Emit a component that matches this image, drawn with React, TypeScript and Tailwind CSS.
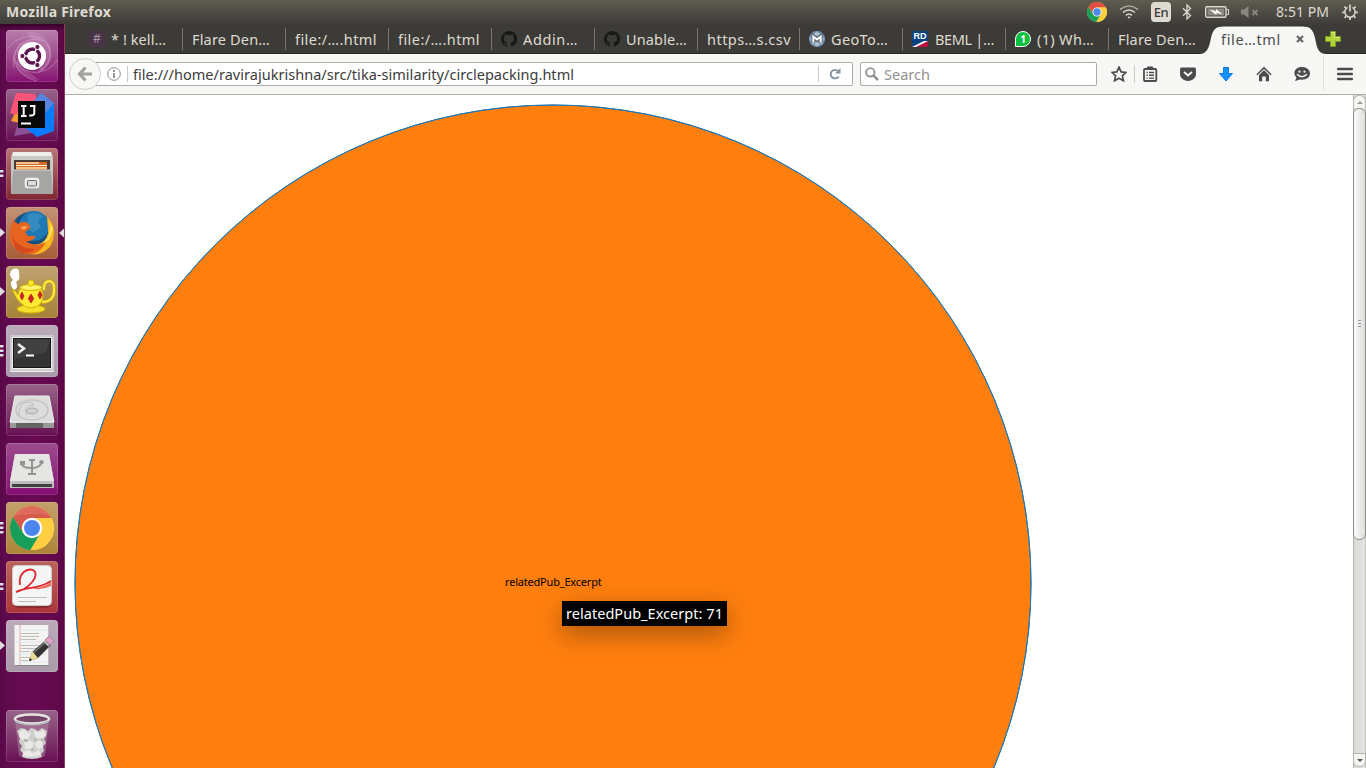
import { useLayoutEffect, useRef, useState, type ReactNode } from "react";

/** Single line of text whose tracking is adjusted so that it spans `w` pixels. */
function Fit({ w, className = "", children }: { w: number; className?: string; children: string }) {
  const ref = useRef<HTMLSpanElement>(null);
  const [tracking, setTracking] = useState(0);
  useLayoutEffect(() => {
    const el = ref.current;
    if (!el) return;
    el.style.letterSpacing = "0px";
    const next = (w - el.getBoundingClientRect().width) / children.length;
    el.style.letterSpacing = `${next}px`;
    setTracking(next);
  }, [w, children]);
  return (
    <span ref={ref} className={`inline-block shrink-0 whitespace-nowrap ${className}`} style={{ letterSpacing: tracking }}>
      {children}
    </span>
  );
}

function ChromeLogo({ className }: { className: string }) {
  return (
    <svg viewBox="0 0 44 44" className={className}>
      <circle cx="22" cy="22" r="22" fill="#ffcf40" />
      <path d="M22 12 H41.6 A22 22 0 0 0 3 11 L13.3 27 Z" fill="#dd5144" />
      <path d="M3 11 A22 22 0 0 0 20.5 44 L30.7 27 L22 32 L13.3 27 Z" fill="#1a9f5c" />
      <path d="M22 12 H41.6 A22 22 0 0 1 20.5 44 L30.7 27 Z" fill="#ffcf40" />
      <circle cx="22" cy="22" r="10" fill="#f4f4f4" />
      <circle cx="22" cy="22" r="8" fill="#4a8af4" />
    </svg>
  );
}

function TopPanel() {
  return (
    <header className="flex h-6 shrink-0 items-center bg-linear-to-b from-[#5f5c50] to-[#3e3d39] text-[14px] leading-6 text-[#dfdbd2]">
      <Fit w={105} className="ml-1.5 font-bold">Mozilla Firefox</Fit>
      <div className="ml-auto flex items-center pr-2">
        <ChromeLogo className="mr-3 size-5" />
        <svg viewBox="0 0 20 16" className="mr-3 h-4 w-5" fill="none" stroke="#dfdbd2" strokeWidth="1.6">
          <path d="M1 5.5 Q10 -1.5 19 5.5" stroke="#aaa79f" />
          <path d="M4 8.5 Q10 3.5 16 8.5" />
          <path d="M7 11.3 Q10 8.7 13 11.3" />
          <path d="M8.5 13 L10 14.8 L11.5 13 Q10 12 8.5 13Z" fill="#dfdbd2" stroke="none" />
        </svg>
        <span className="mr-[11px] flex size-5 items-center justify-center rounded-sm bg-[#dfdbd2] text-[13px] font-medium tracking-[-0.5px] text-[#3c3b37]">En</span>
        <svg viewBox="0 0 10 16" className="mr-[13px] h-4 w-[10px]" fill="none" stroke="#dfdbd2" strokeWidth="1.3">
          <path d="M1 4.3 L8.5 11.5 L5 15 V1 L8.5 4.5 L1 11.7" />
        </svg>
        <svg viewBox="0 0 24 14" className="mr-3 h-3.5 w-6">
          <rect x="0.7" y="1.7" width="20.3" height="10.6" rx="1.5" fill="none" stroke="#dfdbd2" strokeWidth="1.4" />
          <rect x="2.5" y="3.5" width="16.7" height="7" fill="#8b8982" />
          <path d="M21.5 4.5 h2 v5 h-2" fill="none" stroke="#dfdbd2" />
          <path d="M4.5 4.5 L11 6.2 L11.2 4 L17.8 9.8 L11.7 7.8 L11.3 10Z" fill="#fff" />
        </svg>
        <svg viewBox="0 0 18 14" className="mr-[17px] h-3.5 w-[18px]">
          <path d="M0 4.5 h3 L7.5 1 v12 L3 9.5 H0Z" fill="#8a8881" />
          <path d="M11.5 5 l5 5 m0 -5 l-5 5" stroke="#8a8881" strokeWidth="1.8" />
        </svg>
        <Fit w={53} className="mr-[13px]">8:51 PM</Fit>
        <svg viewBox="0 0 16 16" className="size-4" fill="none" stroke="#dfdbd2">
          <path d="M5.6 3.4 A5.2 5.2 0 1 0 10.4 3.4" strokeWidth="1.5" />
          <path d="M8 0.5 V7.5" strokeWidth="1.6" />
          <path d="M3.7 3.9 L2.3 2.5 M12.3 3.9 L13.7 2.5 M2.6 8.3 H0.2 M13.4 8.3 H15.8 M4 12.4 L2.6 13.8 M12 12.4 L13.4 13.8 M8 13.6 V16" strokeWidth="1.7" />
        </svg>
      </div>
    </header>
  );
}

const tileColors = {
  dash: "from-[#b77dac] to-[#860f72]",
  plum: "from-[#97638a] to-[#680b53]",
  files: "from-[#b77676] to-[#812534]",
  fox: "from-[#c49276] to-[#a75c38]",
  gold: "from-[#bfa370] to-[#a58136]",
  grey: "from-[#bcaabb] to-[#a99aaa]",
  violet: "from-[#9c4b90] to-[#850873]",
  chrome: "from-[#c3a06b] to-[#ad8537]",
  red: "from-[#b9655c] to-[#ac3438]",
};

function Tile({ tone, marks = "", children }: { tone: keyof typeof tileColors; marks?: string; children: ReactNode }) {
  return (
    <div className="flex h-[52px] w-16 shrink-0 items-center">
      <svg viewBox="0 0 6 52" className="h-[52px] w-1.5 shrink-0" fill="#dfdce0">
        {marks === "one" && <path d="M0 21 L5 25.5 L0 30Z" />}
        {marks === "two" && <path d="M0 22 h3.2 q1 1 0 2.4 H0Z M0 26.5 h3.2 q1 1 0 2.4 H0Z" />}
        {marks === "three" && <path d="M0 20 h3.2 q1 1 0 2.4 H0Z M0 24.5 h3.2 q1 1 0 2.4 H0Z M0 29 h3.2 q1 1 0 2.4 H0Z" />}
      </svg>
      <div className={`size-[52px] shrink-0 overflow-hidden rounded-[4px] bg-linear-to-b shadow-[inset_0_0_0_1px_rgba(255,255,255,0.15)] ${tileColors[tone]}`}>
        <svg viewBox="0 0 52 52" className="size-[52px]">{children}</svg>
      </div>
      {tone === "fox" && (
        <svg viewBox="0 0 6 12" className="h-3 w-1.5" fill="#dfdce0"><path d="M1 6 L6 1.5 V10.5Z" /></svg>
      )}
    </div>
  );
}

function Launcher() {
  return (
    <aside className="flex w-[65px] shrink-0 flex-col gap-[7px] border-r border-[#8c3a5e] bg-linear-to-r from-[#5d0a4b] via-[#680a53] to-[#600849] pt-1.5 shadow-[inset_0_6px_6px_-4px_rgba(20,0,15,0.8)]">
      <Tile tone="dash">
        <path d="M20 2 C42 0 49 18 43 32 Q39 40 32 42 L38 26 Z M8 34 C5 16 22 5 40 10 L26 14 Z M10 22 C4 36 16 50 34 50 L16 38Z" fill="#e6bddd" opacity=".2" />
        <g fill="none" stroke="#e6bddd" opacity=".4">
          <path d="M1 19 C12 3 39 1 44 21 C46 31 40 39 32 43" />
          <path d="M8 38 C4 18 20 4 38 11 C48 18 45 35 34 40" />
          <path d="M15 13 C2 27 10 46 31 51" />
          <path d="M51 30 C42 46 15 48 8 27" />
        </g>
        <circle cx="26" cy="27" r="14" fill="#5c1250" opacity=".4" />
        <circle cx="26" cy="26" r="14" fill="#fff" />
        <circle cx="26.5" cy="26" r="7" fill="none" stroke="#5e164d" strokeWidth="3.5" />
        <path d="M26.5 26 L15 26 M26.5 26 L32.5 15.5 M26.5 26 L32.5 36.5" stroke="#fff" strokeWidth="1.4" />
        <circle cx="26.5" cy="26" r="5" fill="#fff" />
        <g fill="#5e164d" stroke="#fff"><circle cx="16.4" cy="26" r="2.6" /><circle cx="31.4" cy="17" r="2.6" /><circle cx="31.4" cy="35" r="2.6" /></g>
      </Tile>
      <Tile tone="plum">
        <path d="M10 4 L29 5 L33 16 L18 30 L4 24Z" fill="#fc5378" />
        <path d="M8 26 L17 22 L18 35 L5 32Z" fill="#f69b2f" />
        <path d="M8 47 L14 28 L28 37 L30 43Z" fill="#8c5396" />
        <path d="M25 15 L35 4 L48 14 V42 L31 48 L20 39Z" fill="#087cfa" />
        <path d="M35 4 L48 14 L37 27 L25 15Z" fill="#5a83dd" />
        <rect x="12" y="12" width="27" height="27" fill="#080808" />
        <path d="M15 17 h5.5 M17.7 17 v10 M15 27 h5.5 M24 17 h5.5 M28.3 16 v8 q0 3.2 -5 2.4" fill="none" stroke="#fff" strokeWidth="2" />
        <path d="M15 34.5 h10" stroke="#fff" strokeWidth="2" />
      </Tile>
      <Tile tone="files" marks="two">
        <path d="M7 4 H45 L47 9 V46 H5 V9Z" fill="#c9c9c7" />
        <path d="M7 4 H45 L46 8 H6Z" fill="#ededec" />
        <path d="M8 12 H44 V25 H8Z" fill="#4b3934" />
        <path d="M10 14 h31 v9 h-31z" fill="#cf6c29" />
        <path d="M10 15 h23 M10 20 h31" stroke="#f5c28a" strokeWidth="2" />
        <path d="M10 17.5 h31" stroke="#fff2e1" />
        <path d="M7 22 H45 L47 46 H5Z" fill="#a5a5a3" />
        <path d="M7 22 H45" stroke="#d7d7d5" />
        <rect x="20" y="31" width="12" height="8" rx="1.5" fill="none" stroke="#eee" strokeWidth="2.5" />
        <rect x="21.5" y="32.5" width="9" height="5.5" rx="1" fill="#ddd" stroke="#666" />
      </Tile>
      <Tile tone="fox" marks="one">
        <circle cx="26" cy="26" r="21.5" fill="#15507f" />
        <circle cx="28" cy="19" r="15" fill="#1d78b4" />
        <path d="M22 7 Q31 4 37 9 L32 14 L35 20 L27 26 L21 20Z" fill="#66b8df" opacity=".3" />
        <path d="M41 10 C49 16 50 29 45 38 C38 49 25 49 16 45 L24 37 C35 40 43 32 42 22 Z" fill="#f9b51f" />
        <path d="M41 10 C47 20 44 33 33 39 Q45 35 47 22Z" fill="#ffe25a" />
        <path d="M7 13 L12 17 Q16 14 20 15 L24 18 L24 22 L19 25 L22 29 L30 29 Q27 35 20 34 Q29 41 40 35 C33 49 19 51 9 41 C1 33 4 22 7 13Z" fill="#e86421" />
        <path d="M5 27 Q12 42 29 42 Q18 51 9 41Z" fill="#d64b1d" />
        <path d="M14 20 L22 19 L18 23Z" fill="#f9ab60" />
      </Tile>
      <Tile tone="gold" marks="one">
        <path d="M8 24 Q2 17 7 14 Q1 7 7 3 Q14 1 13 8 Q15 13 10 16 Q13 21 8 24Z" fill="#fff" />
        <g stroke="#d3b400" strokeWidth="1">
          <path d="M38 24 C37 13 47 13 48 20 C49 30 46 36 36 36" fill="none" strokeWidth="3.6" />
          <path d="M38 24 C37 13 47 13 48 20 C49 30 46 36 36 36" fill="none" stroke="#ffed57" strokeWidth="1.8" />
          <ellipse cx="25" cy="43" rx="14" ry="4" fill="#f6df2d" />
          <path d="M6 23 Q10 25 12 29 Q12 20 25 19 Q37 20 37 29 Q37 41 25 42 Q13 41 6 23Z" fill="#ffe932" />
          <ellipse cx="25" cy="21.5" rx="11" ry="3" fill="#fff36c" />
          <circle cx="25" cy="17" r="3" fill="#ffe932" />
        </g>
        <g fill="#d71d26" stroke="#911" strokeWidth=".6"><path d="M16 26 l2 4 l-2 4 l-2 -4Z" /><path d="M25 28 l2.7 4.5 l-2.7 4.5 l-2.7 -4.5Z" /><path d="M34 25 l2 4 l-2 4 l-2 -4Z" /></g>
      </Tile>
      <Tile tone="grey" marks="three">
        <rect x="4" y="10" width="44" height="37" rx="1" fill="#eee" />
        <rect x="5" y="11" width="42" height="34" fill="none" stroke="#aaa" />
        <rect x="7.5" y="13.5" width="37" height="29" fill="#343434" stroke="#161616" />
        <path d="M8 14 H44 L40 27 L8 34Z" fill="#5c5c5b" opacity=".35" />
        <path d="M12 19 L18 23.5 L12 28" fill="none" stroke="#eee" strokeWidth="2.5" />
        <path d="M20 30.5 h8" stroke="#fff" strokeWidth="2" />
      </Tile>
      <Tile tone="plum">
        <path d="M9 12 H43 L48 38 V44 H4 V38Z" fill="#c9c9c7" />
        <path d="M9 12 H43 L48 38 H4Z" fill="#dcdcda" stroke="#ededed" />
        <path d="M4 39 H48 V44 H4Z" fill="#999" /><path d="M10 39 h27 v5 h-27z" fill="#646464" />
        <ellipse cx="26" cy="26" rx="16" ry="10" fill="none" stroke="#bebebe" strokeWidth="1.2" />
        <ellipse cx="26" cy="27" rx="5.5" ry="3" fill="#d0d0ce" stroke="#aaa" />
        <path d="M13 31 Q12 17 25 18 L28 21 Q16 22 21 31" fill="none" stroke="#bfbfbf" />
      </Tile>
      <Tile tone="violet">
        <path d="M9 11 H43 L48 39 V45 H4 V39Z" fill="#cfcfcd" />
        <path d="M9 11 H43 L48 38 H4Z" fill="#e5e5e3" />
        <path d="M4 38 H48 V45 H4Z" fill="#bebebc" /><path d="M6 41 h40 v3 h-40z" fill="#404040" />
        <g fill="none" stroke="#929291" strokeWidth="2"><path d="M26 30 V17 M16 21 Q16 25 26 25 Q34 25 36 19 M23 17 h6 M22 31 h8" /></g>
        <path d="M14 18 h5 v4 h-5z M34 17 l4 1 l-1 3 l-4 -1z" fill="#929291" />
      </Tile>
      <Tile tone="chrome" marks="three">
        <g transform="translate(4 4)">
          <circle cx="22" cy="22" r="22" fill="#ffce43" />
          <path d="M22 12 H41.6 A22 22 0 0 0 3 11 L13.3 27Z" fill="#d85a4b" />
          <path d="M3 11 A22 22 0 0 0 20.5 44 L30.7 27 L22 32 L13.3 27Z" fill="#179e5a" />
          <path d="M22 12 H41.6 A22 22 0 0 1 20.5 44 L30.7 27Z" fill="#ffce43" />
          <path d="M4 9.5 A22 22 0 0 1 40 9.5 Q22 7 4 9.5Z" fill="#eb8b80" opacity=".35" />
          <circle cx="22" cy="22" r="10.2" fill="#fff" /><circle cx="22" cy="22" r="8" fill="#4a86ee" />
        </g>
      </Tile>
      <Tile tone="red" marks="two">
        <rect x="7" y="6" width="39" height="41" rx="5" fill="#6b1b1b" opacity=".5" />
        <rect x="6.5" y="4.5" width="39" height="40" rx="4" fill="#f5f5f5" stroke="#ccc" />
        <path d="M14 24 C12 12 21 7 27 9 C35 14 23 28 10 31 C22 25 32 29 45 20" fill="none" stroke="#df282d" strokeWidth="1.8" />
        <path d="M24 27 Q36 28 45 21 V25 Q35 30 24 27Z" fill="#ee6a64" />
        <path d="M12 36.5 h29 M12 40.5 h18" stroke="#bcbcbc" />
      </Tile>
      <Tile tone="grey" marks="one">
        <rect x="9" y="6" width="34" height="40" fill="#8d858c" /><rect x="8.5" y="5" width="34" height="40" fill="#f4f4f2" />
        <path d="M14 5 V45" stroke="#e8a7a7" /><path d="M10 10 h31 M10 22 h31 M10 34 h31 M10 42 h31" stroke="#dce8f2" />
        <path d="M15 13.5 h18 M15 16.5 h18 M15 19.5 h15 M15 25.5 h18 M15 28.5 h17 M15 31.5 h9 M15 37.5 h9 M15 40.5 h7" stroke="#bcbcba" />
        <path d="M23 41 L26 32 L40 20 L45 25 L32 38Z" fill="#333" /><path d="M27 33 L41 21" stroke="#777" strokeWidth="1.5" />
        <path d="M23 41 L26 31 L32 38Z" fill="#eddb94" /><path d="M23 41 l1 -3 l2 2Z" fill="#111" />
        <path d="M39 20 L43 16 L48 21 L44 25Z" fill="#dfa1c7" stroke="#aa829c" /><path d="M38 21 l5 5" stroke="#bbb" strokeWidth="2" />
      </Tile>
      <div className="mt-[31px]">
        <Tile tone="plum">
          <path d="M9 10 H43 L39 46 Q26 51 13 46Z" fill="#d5bfd1" opacity=".3" />
          <path d="M11 21 l4 -3 l4 1 l3 2 l3 -3 l4 1 l3 2 l4 -3 l5 3 l-1 5 l-2 3 l2 4 l-3 3 l1 5 l-3 3 l1 3 q-10 4 -20 0 l1 -4 l-3 -3 l2 -4 l-3 -4 l1 -4Z" fill="#cfcfcd" />
          <g fill="#e9e9e7">
            <path d="M13 22 l5 -3 l4 4 l3 -1 l-2 6 l-6 2 l-4 -3Z" />
            <path d="M28 21 l5 1 l5 -2 l2 5 l-5 4 l-6 -2Z" />
            <path d="M18 33 l6 -3 l4 4 l-3 5 l-6 0Z" />
            <path d="M30 31 l6 0 l1 6 l-5 2 l-3 -4Z" />
            <path d="M17 42 l5 -2 l5 3 l6 -3 l2 5 q-9 3 -18 1Z" />
          </g>
          <path d="M18 30 l4 1 M28 29 l3 2 M25 39 l3 1 M35 29 l2 2" stroke="#a4a4a2" strokeWidth="1.3" />
          <ellipse cx="26" cy="9" rx="17" ry="4.5" fill="#764369" stroke="#e4e4e2" strokeWidth="2.5" />
          <path d="M9 10 Q26 18 43 10 v2 Q26 19 9 12Z" fill="#bbb" />
        </Tile>
      </div>
    </aside>
  );
}

type TabInfo = { title: string; w: number; icon?: string };
const tabs: TabInfo[] = [
  { title: "* ! kell…", w: 55, icon: "hash" },
  { title: "Flare Den…", w: 78 },
  { title: "file:/….html", w: 82 },
  { title: "file:/….html", w: 82 },
  { title: "Addin…", w: 55, icon: "github" },
  { title: "Unable…", w: 61, icon: "github" },
  { title: "https…s.csv", w: 84 },
  { title: "GeoTo…", w: 57, icon: "globe" },
  { title: "BEML |…", w: 59, icon: "rd" },
  { title: "(1) Wh…", w: 57, icon: "whatsapp" },
  { title: "Flare Den…", w: 78 },
];

function Favicon({ kind }: { kind: string }) {
  if (kind === "hash")
    return <span className="mr-1.5 flex size-4 shrink-0 items-center justify-center bg-[#493347] text-[12px] leading-4 text-[#a993a7]">#</span>;
  if (kind === "rd")
    return (
      <span className="mr-[7px] flex size-4 shrink-0 flex-col bg-[#b9113d]">
        <span className="h-[10px] bg-[#07437e] text-center font-['Liberation_Sans',sans-serif] text-[9px] leading-[10px] font-bold text-white">RD</span>
        <svg viewBox="0 0 16 6" className="h-[6px] w-4"><path d="M0 0 H13 L0 6Z" fill="#07437e" /><path d="M12 0 h4 L4 6 H0Z" fill="#fff" /></svg>
      </span>
    );
  if (kind === "whatsapp")
    return (
      <span className="mr-1.5 flex size-4 shrink-0 items-center justify-center rounded-full rounded-bl-none border border-white bg-[#0fc143] text-[10px] font-bold text-white">1</span>
    );
  if (kind === "globe")
    return (
      <svg viewBox="0 0 16 16" className="mr-1.5 size-4 shrink-0">
        <circle cx="8" cy="8" r="7.3" fill="#b9c6d1" stroke="#779fcb" strokeWidth="1.4" />
        <path d="M1 5 h14 M1 11 h14 M5 1 v14 M11 1 v14" stroke="#6b7a89" />
        <path d="M4.3 11.5 V5.5 L8 8.5 L11.7 5.5 V11.5" fill="none" stroke="#526070" strokeWidth="4" /><path d="M4.3 11.5 V5.5 L8 8.5 L11.7 5.5 V11.5" fill="none" stroke="#fff" strokeWidth="2" />
      </svg>
    );
  return (
    <svg viewBox="0 0 16 16" className="mr-1.5 size-4 shrink-0" fill="#191818">
      <path d="M8 0a8 8 0 0 0-2.53 15.59c.4.07.55-.17.55-.38v-1.49C3.8 14.2 3.33 12.8 3.33 12.8c-.36-.92-.89-1.17-.89-1.17-.73-.5.05-.49.05-.49.8.06 1.23.83 1.23.83.71 1.23 1.87.87 2.33.66.07-.52.28-.87.5-1.07-1.77-.2-3.64-.89-3.64-3.95 0-.87.31-1.59.82-2.15-.08-.2-.35-1.01.08-2.11 0 0 .67-.22 2.2.82a7.7 7.7 0 0 1 4 0c1.53-1.04 2.2-.82 2.2-.82.43 1.1.16 1.91.08 2.11.51.56.82 1.28.82 2.15 0 3.07-1.87 3.75-3.65 3.95.29.25.54.73.54 1.48v2.2c0 .21.15.46.55.38A8 8 0 0 0 8 0Z" />
    </svg>
  );
}

function TabBar() {
  return (
    <div className="flex h-[30px] shrink-0 items-center border-b border-[#282724] bg-[#3c3b37] pt-px pl-3.5 text-[14.5px] leading-6 text-[#dfdbd2]">
      {tabs.map((tab, i) => (
        <div
          key={i}
          className={`flex h-[22px] shrink-0 items-center ${i === 0 ? "w-[104px] pl-[10px]" : i === 6 ? "w-[102px] pl-[9px]" : i === 10 ? "w-[94px] pl-[9px]" : "w-[103px] pl-[9px]"} ${i < 10 ? "border-r border-[#777570]" : ""}`}
        >
          {tab.icon && <Favicon kind={tab.icon} />}
          <Fit w={tab.w}>{tab.title}</Fit>
        </div>
      ))}
      <div className="relative -ml-1 flex h-[29px] w-[130px] shrink-0 items-center text-[#4c4c4c]">
        <svg viewBox="0 0 130 29" className="absolute inset-0 h-[29px] w-[130px]">
          <path d="M0 29 C8 29 10 23 12 13 C14 4 17 1.5 24 1.5 H103 C111 1.5 114 4 116 13 C118 23 119 29 128 29Z" fill="#f7f7f5" />
        </svg>
        <Fit w={60} className="relative ml-[22px]">file…tml</Fit>
        <svg viewBox="0 0 8 8" className="relative ml-[15px] size-2"><path d="M1 1 L7 7 M7 1 L1 7" stroke="#666" strokeWidth="2.2" /></svg>
      </div>
      <svg viewBox="0 0 16 16" className="-ml-[4px] size-4 shrink-0"><path d="M5.5 .5 h5 v5 h5 v5 h-5 v5 h-5 v-5 h-5 v-5 h5Z" fill="#b5d33b" stroke="#759c27" /><path d="M6.5 1.5 h3 v5 h5" fill="none" stroke="#d8eb79" /></svg>
    </div>
  );
}

function Toolbar() {
  return (
    <div className="flex h-[41px] shrink-0 items-center border-b border-[#adada7] bg-[#f7f7f5] text-[14.5px] text-[#3c3c3c]">
      <div className="z-10 ml-1 flex size-8 shrink-0 items-center justify-center rounded-full border border-[#cfcfcb] bg-[#f7f7f5]">
        <svg viewBox="0 0 16 16" className="size-4" fill="none" stroke="#a2a2a0" strokeWidth="3.2"><path d="M8.5 1.5 L2.5 8 L8.5 14.5 M3 8 H15" /></svg>
      </div>
      <div className="-ml-[9px] flex h-6 w-[761px] shrink-0 items-center rounded-r-[2px] border border-l-0 border-[#adada7] bg-white pl-[15px]">
        <svg viewBox="0 0 14 14" className="size-3.5 shrink-0"><circle cx="7" cy="7" r="6.3" fill="none" stroke="#8a8a8a" /><path d="M7 3 V5 M7 6 V11" stroke="#8a8a8a" strokeWidth="1.8" /></svg>
        <span className="ml-1.5 h-4 w-px bg-[#ccc]" />
        <Fit w={441} className="ml-[5px] leading-5">file:///home/ravirajukrishna/src/tika-similarity/circlepacking.html</Fit>
        <span className="ml-auto h-4 w-px bg-[#ccc]" />
        <svg viewBox="0 0 12 12" className="mr-[11px] ml-[10px] size-3 shrink-0"><path d="M9.2 3.2 A4.3 4.3 0 1 0 9.6 8.6" fill="none" stroke="#8393a2" strokeWidth="1.9" /><path d="M11.5 0 V5.5 H6Z" fill="#8393a2" /></svg>
      </div>
      <div className="ml-[7px] flex h-6 w-[237px] shrink-0 items-center rounded-[2px] border border-[#adada7] bg-white pl-1 text-[#929292]">
        <svg viewBox="0 0 14 14" className="mr-[5px] size-3.5" fill="none" stroke="#929292"><circle cx="5.3" cy="5.3" r="4.2" strokeWidth="1.9" /><path d="M8.3 8.3 L13 13" strokeWidth="2.5" /></svg>
        <Fit w={46} className="leading-5">Search</Fit>
      </div>
      <svg viewBox="0 0 16 16" className="ml-3.5 size-4 shrink-0" fill="none" stroke="#4c4c4c" strokeWidth="1.7"><path d="M8 1.2 L10.1 5.9 L15 6.4 L11.4 9.8 L12.4 14.7 L8 12.2 L3.6 14.7 L4.6 9.8 L1 6.4 L5.9 5.9Z" /></svg>
      <span className="ml-[7px] h-[18px] w-px bg-[#cdcdca]" />
      <svg viewBox="0 0 16 16" className="ml-[7px] size-4 shrink-0" fill="none" stroke="#4c4c4c"><rect x="2" y="3" width="12.3" height="12" rx="1" strokeWidth="1.8" /><path d="M5 3 L6 1.5 H10 L11 3" strokeWidth="2" /><path d="M4.5 6.5 h1.3 M7 6.5 h5 M4.5 9.3 h1.3 M7 9.3 h5 M4.5 12.1 h1.3 M7 12.1 h5" strokeWidth="1.4" /></svg>
      <svg viewBox="0 0 16 16" className="ml-[22px] size-4 shrink-0"><path d="M0 3 Q0 1.5 1.5 1.5 H14.5 Q16 1.5 16 3 V8 C16 12 12 15 8 15 C4 15 0 12 0 8Z" fill="#4c4c4c" /><path d="M4 6 L8 9.5 L12 6" fill="none" stroke="#f7f7f5" strokeWidth="2" /></svg>
      <svg viewBox="0 0 16 16" className="ml-[22px] size-4 shrink-0"><path d="M5.5 1.5 h5 v6 h4 L8 15 L1.5 7.5 h4Z" fill="#1491ff" stroke="#087ce5" /></svg>
      <svg viewBox="0 0 16 16" className="ml-[22px] size-4 shrink-0" fill="#4c4c4c"><path d="M8 .8 L15.7 8.3 L14.7 9.3 L8 2.9 L1.3 9.3 L.3 8.3Z" /><path d="M8 4.3 L13 9.1 V15.3 H9.8 V10.5 H6.2 V15.3 H3 V9.1Z" /></svg>
      <svg viewBox="0 0 16 16" className="ml-[22px] size-4 shrink-0"><path d="M8 1 C13 1 16 4 16 7.5 C16 12 11 14.5 6 13.5 L1 15 L2.5 11.5 C-2 7 1 1 8 1Z" fill="#4c4c4c" /><circle cx="5.5" cy="5.7" r="1.1" fill="#f7f7f5" /><circle cx="10.5" cy="5.7" r="1.1" fill="#f7f7f5" /><path d="M3 8.3 Q8 13 13 8.3" fill="none" stroke="#f7f7f5" strokeWidth="1.4" /></svg>
      <span className="ml-[13px] h-[34px] w-px bg-[#dededb]" />
      <svg viewBox="0 0 16 14" className="ml-[13px] h-3.5 w-4 shrink-0" stroke="#4c4c4c" strokeWidth="2.5" strokeLinecap="round"><path d="M1.2 2 H14.8 M1.2 7 H14.8 M1.2 12 H14.8" /></svg>
    </div>
  );
}

function Scrollbar() {
  return (
    <div className="flex w-[13px] shrink-0 flex-col items-center bg-linear-to-r from-[#d8d8d6] to-[#e6e6e4] shadow-[inset_1px_0_#b5b5b0,inset_-1px_0_#c4c4bc]">
      <div className="flex h-[13px] w-[13px] justify-center rounded-t-[6px] border border-b-0 border-[#b5b5b0] bg-[#f5f5f3] pt-[5px]">
        <svg viewBox="0 0 6 3" className="h-[3px] w-1.5"><path d="M0 3 L3 0 L6 3Z" fill="#999" /></svg>
      </div>
      <div className="flex h-[432px] w-[13px] flex-col items-center justify-center gap-[2px] rounded-[6px] border border-[#8f8f8d] bg-linear-to-r from-[#fbfbfa] to-[#dededc] pb-0.5">
        <span className="h-px w-[3px] bg-[#999]" />
        <span className="h-px w-[3px] bg-[#999]" />
        <span className="h-px w-[3px] bg-[#999]" />
      </div>
      <div className="mt-auto mb-px flex h-[14px] w-[13px] items-center justify-center rounded-b-[6px] border border-[#b5b5b0] bg-[#f5f5f3]">
        <svg viewBox="0 0 6 3" className="h-[3px] w-1.5"><path d="M0 0 L3 3 L6 0Z" fill="#555" /></svg>
      </div>
    </div>
  );
}

export default function App() {
  return (
    <div className="flex h-[768px] w-[1366px] flex-col overflow-hidden bg-white font-['Noto_Sans',sans-serif]">
      <TopPanel />
      <div className="flex min-h-0 flex-1">
        <Launcher />
        <div className="flex min-w-0 flex-1 flex-col">
          <TabBar />
          <Toolbar />
          <div className="flex min-h-0 flex-1">
            <main className="relative min-w-0 flex-1 overflow-hidden bg-white">
              <svg viewBox="0 0 1288 673" className="block h-[673px] w-[1288px]">
                <circle cx="488" cy="488" r="478" fill="#ff7f0e" stroke="#1f77b4" />
                <circle cx="488" cy="488" r="478" fill="none" stroke="#1f77b4" />
              </svg>
              <div className="absolute top-[480px] left-[440px] text-[11px] leading-[14px] text-black">
                <Fit w={96.5}>relatedPub_Excerpt</Fit>
              </div>
              <div className="absolute top-[506px] left-[497px] h-[25px] w-[165px] bg-black pl-1 text-[14.5px] leading-[25px] text-white shadow-[0_8px_26px_rgba(0,0,0,0.35)]">
                <Fit w={157}>relatedPub_Excerpt: 71</Fit>
              </div>
            </main>
            <Scrollbar />
          </div>
        </div>
      </div>
    </div>
  );
}
